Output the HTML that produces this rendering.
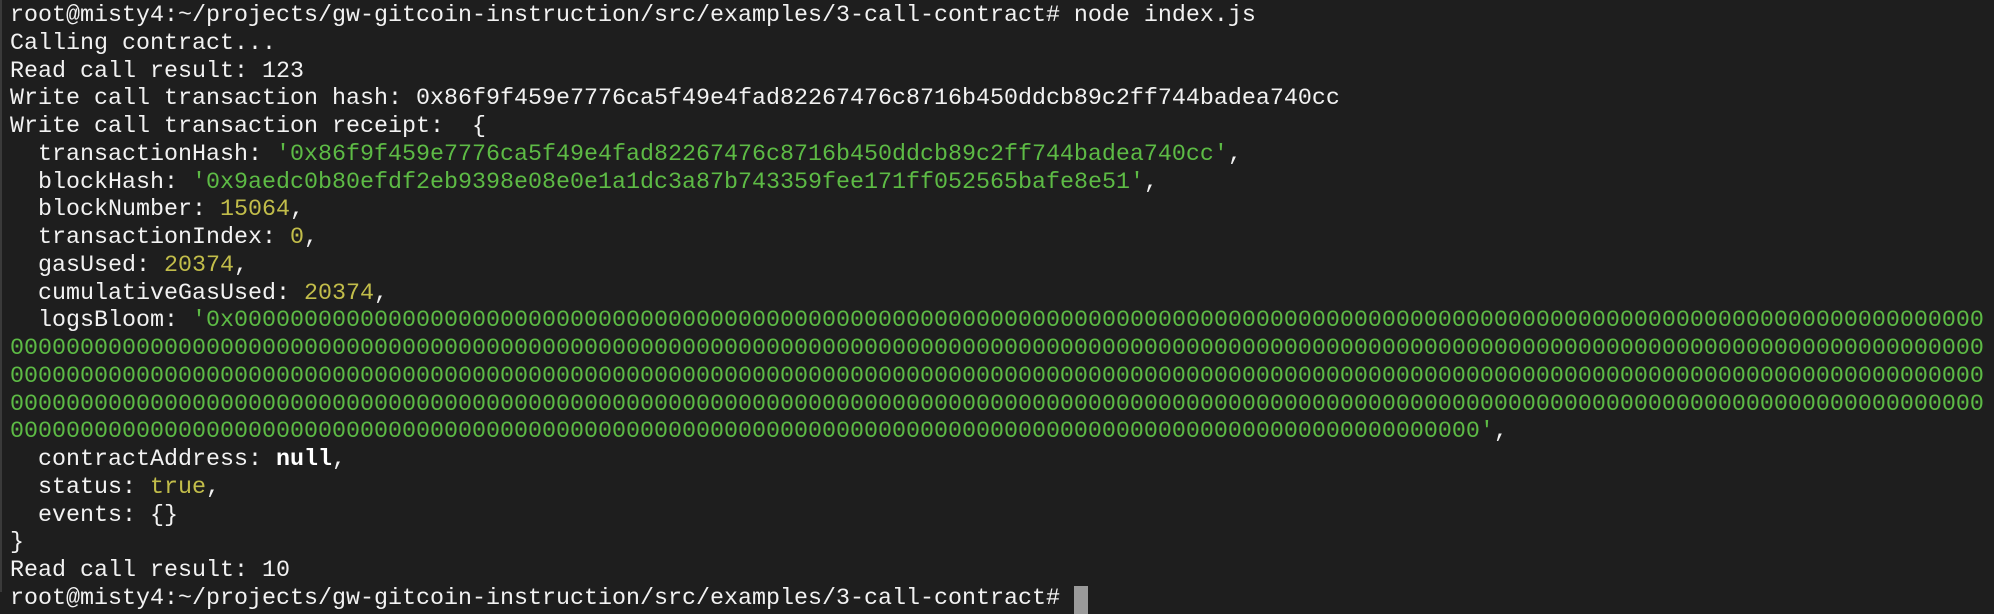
<!DOCTYPE html>
<html><head><meta charset="utf-8"><style>
html,body{margin:0;padding:0;background:#1e1e1e;width:1994px;height:592px;overflow:hidden}
.bar{position:absolute;left:0;top:0;width:2px;height:592px;background:#3a3a3a}
pre{position:absolute;left:10px;top:3px;margin:0;font-family:"Liberation Mono",monospace;font-size:23.33px;line-height:27.75px;color:#f2f2f2;white-space:pre}
.g{color:#5dbb45}.y{color:#c2bd4a}b{color:#fff}
.cur{display:inline-block;width:14px;height:28px;background:#9a9a9a;vertical-align:top}
</style></head><body><div class="bar"></div><pre>root@misty4:~/projects/gw-gitcoin-instruction/src/examples/3-call-contract# node index.js
Calling contract...
Read call result: 123
Write call transaction hash: 0x86f9f459e7776ca5f49e4fad82267476c8716b450ddcb89c2ff744badea740cc
Write call transaction receipt:  {
  transactionHash: <span class="g">'0x86f9f459e7776ca5f49e4fad82267476c8716b450ddcb89c2ff744badea740cc'</span>,
  blockHash: <span class="g">'0x9aedc0b80efdf2eb9398e08e0e1a1dc3a87b743359fee171ff052565bafe8e51'</span>,
  blockNumber: <span class="y">15064</span>,
  transactionIndex: <span class="y">0</span>,
  gasUsed: <span class="y">20374</span>,
  cumulativeGasUsed: <span class="y">20374</span>,
  logsBloom: <span class="g">'0x00000000000000000000000000000000000000000000000000000000000000000000000000000000000000000000000000000000000000000000000000000
000000000000000000000000000000000000000000000000000000000000000000000000000000000000000000000000000000000000000000000000000000000000000000000
000000000000000000000000000000000000000000000000000000000000000000000000000000000000000000000000000000000000000000000000000000000000000000000
000000000000000000000000000000000000000000000000000000000000000000000000000000000000000000000000000000000000000000000000000000000000000000000
000000000000000000000000000000000000000000000000000000000000000000000000000000000000000000000000000000000'</span>,
  contractAddress: <b>null</b>,
  status: <span class="y">true</span>,
  events: {}
}
Read call result: 10
root@misty4:~/projects/gw-gitcoin-instruction/src/examples/3-call-contract# <span class="cur"></span></pre></body></html>
